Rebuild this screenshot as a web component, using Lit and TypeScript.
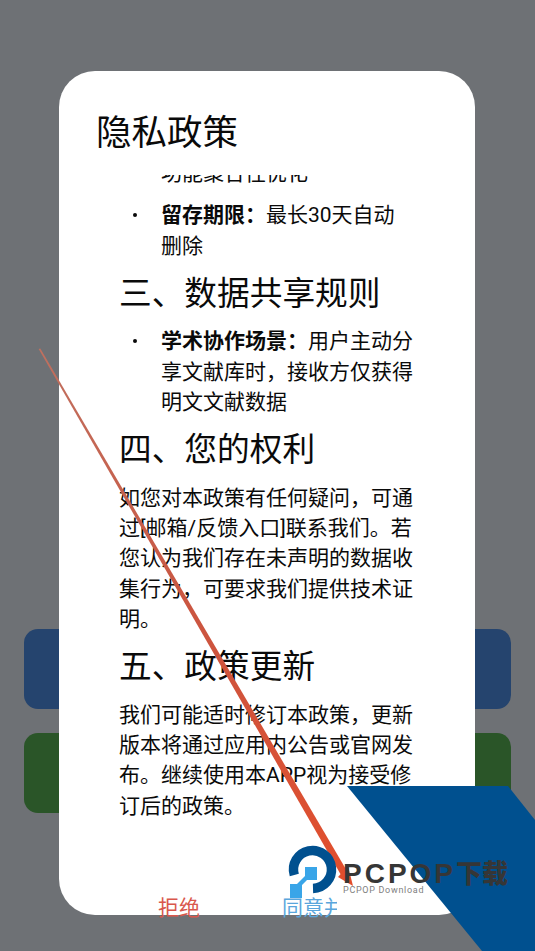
import { LitElement, html, css, svg } from "lit";
import { customElement } from "lit/decorators.js";

@customElement("app-root")
export class AppRoot extends LitElement {
  static styles = css`
    :host {
      display: block;
      position: relative;
      width: 535px;
      height: 951px;
      overflow: hidden;
      background: #6e7175;
      font-family: Roboto, "Noto Sans CJK SC", sans-serif;
      color: #0a0a0a;
    }
    .back {
      display: flex;
      flex-direction: column;
      gap: 24px;
      padding: 629px 24px 0;
    }
    .back div {
      height: 80px;
      border-radius: 14px;
    }
    .b1 { background: #25446e; }
    .b2 { background: #2a5528; }
    .dialog {
      position: absolute;
      left: 59px;
      top: 71px;
      width: 416px;
      height: 844px;
      background: #fff;
      border-radius: 36px;
      display: flex;
      flex-direction: column;
    }
    h1 {
      margin: 0;
      padding: 41px 37px 21px;
      font-size: 35.5px;
      line-height: 42px;
      font-weight: 400;
    }
    .scroll {
      flex: 1;
      min-height: 0;
      overflow: hidden;
      padding: 0 61.5px 0 60px;
      font-size: 21px;
      line-height: 30.3px;
    }
    .inner { margin-top: -17px; }
    ul {
      margin: 0;
      padding: 0;
      list-style: none;
    }
    li {
      display: flex;
      margin-bottom: 12px;
    }
    li:last-child { margin-bottom: 0; }
    .dot {
      flex: none;
      width: 4px;
      height: 4px;
      margin: 13px 24px 0 14px;
      border-radius: 50%;
      background: #0a0a0a;
    }
    h2 {
      margin: 13px 0 12.5px;
      font-size: 32.7px;
      line-height: 40px;
      font-weight: 400;
    }
    p { margin: 0; }
    .actions {
      display: flex;
      gap: 82px;
      padding-left: 99px;
      margin-bottom: -8px;
      font-size: 21px;
      line-height: 30px;
    }
    .reject { color: #d9574c; }
    .agree {
      color: #5aa6dc;
      width: 55px;
      overflow: hidden;
      white-space: nowrap;
    }
    .overlay {
      position: absolute;
      left: 0;
      top: 0;
      pointer-events: none;
    }
    .wm {
      position: absolute;
      left: 343px;
      top: 862px;
      width: 190px;
      color: #363636;
    }
    .wm b {
      display: block;
      font-family: "Liberation Sans", "Noto Sans CJK SC", sans-serif;
      font-size: 28px;
      line-height: 24px;
      font-weight: 900;
      letter-spacing: 3px;
      white-space: nowrap;
    }
    .wm b i {
      font-style: normal;
      font-size: 26px;
      letter-spacing: 0;
    }
    .wm span {
      display: block;
      font-size: 9px;
      line-height: 8px;
      letter-spacing: 0.7px;
      color: #808080;
    }
  `;

  render() {
    return html`
      <div class="back"><div class="b1"></div><div class="b2"></div></div>
      <section class="dialog">
        <h1>隐私政策</h1>
        <div class="scroll">
          <div class="inner">
            <ul>
              <li><span class="dot"></span><span>功能聚合性优化</span></li>
              <li><span class="dot"></span><span><strong>留存期限：</strong>最长30天自动删除</span></li>
            </ul>
            <h2>三、数据共享规则</h2>
            <ul>
              <li><span class="dot"></span><span><strong>学术协作场景：</strong>用户主动分享文献库时，接收方仅获得明文文献数据</span></li>
            </ul>
            <h2>四、您的权利</h2>
            <p>如您对本政策有任何疑问，可通过[邮箱/反馈入口]联系我们。若您认为我们存在未声明的数据收集行为，可要求我们提供技术证明。</p>
            <h2>五、政策更新</h2>
            <p>我们可能适时修订本政策，更新版本将通过应用内公告或官网发布。继续使用本APP视为接受修订后的政策。</p>
          </div>
        </div>
        <div class="actions">
          <span class="reject">拒绝</span>
          <span class="agree">同意并继续</span>
        </div>
      </section>
      <svg class="overlay" width="535" height="951" viewBox="0 0 535 951">
        <defs>
          <linearGradient id="ar" x1="39" y1="349" x2="352" y2="885" gradientUnits="userSpaceOnUse">
            <stop offset="0" stop-color="#c0705f"></stop>
            <stop offset="0.5" stop-color="#cb5540"></stop>
            <stop offset="1" stop-color="#e24e2c"></stop>
          </linearGradient>
        </defs>
        ${svg`
          <polygon points="347,786 508,786 535,820 535,951 482,951" fill="#00508f"></polygon>
          <polygon points="38.7,349 40.3,348.6 347,871 341,875" fill="url(#ar)"></polygon>
          <polygon points="338,877 348,866 353,886" fill="#e24e2c"></polygon>
          <path d="M294.3 875 A19 19 0 1 1 313 888.5" fill="none" stroke="#00508f" stroke-width="9.5"></path>
          <path d="M305 867 H317 V880 H307 L302 885 V898 H290 V884 H297 L305 876 Z" fill="#39a5e8"></path>
        `}
      </svg>
      <div class="wm"><b>PCPOP<i>下载</i></b><span>PCPOP Download</span></div>
    `;
  }
}
